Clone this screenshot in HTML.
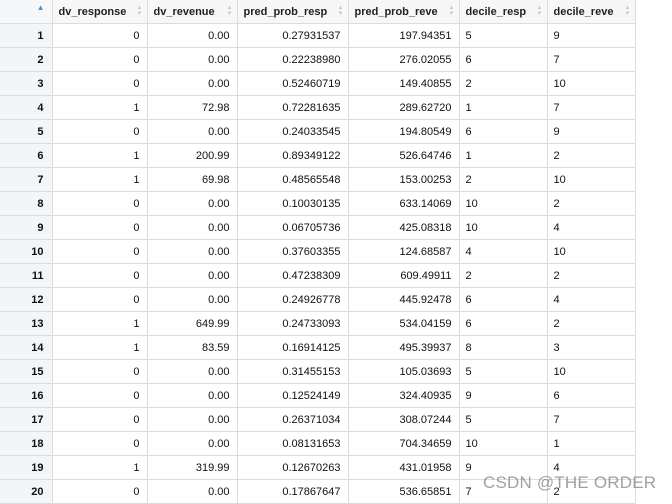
<!DOCTYPE html>
<html><head><meta charset="utf-8"><style>
body{margin:0;background:#fff;width:672px;height:499px;overflow:hidden;position:relative;font-family:"Liberation Sans",Arial,sans-serif;font-size:11px;color:#111}
table{border-collapse:collapse;table-layout:fixed;position:absolute;left:0;top:0}
td,th{border:1px solid #dcdcdc;height:23px;padding:0 6px;white-space:nowrap;overflow:hidden}
th{background:#f6f7f8;text-align:left;font-weight:bold;color:#222;position:relative;border-top:none}
th .s{position:absolute;right:4px;top:5px;font-size:6px;line-height:6px;color:#c8c8c8}
td.n{background:#f3f6f8;text-align:right;font-weight:bold;padding-right:8px}
td.r{text-align:right;padding-right:7px}
td:first-child,th:first-child{border-left:none}
.wm{position:absolute;left:483px;top:473px;font-size:17px;color:rgba(120,120,120,.7);letter-spacing:.2px}
</style></head><body>
<table>
<colgroup><col style="width:52px"><col style="width:95px"><col style="width:90px"><col style="width:111px"><col style="width:111px"><col style="width:88px"><col style="width:88px"></colgroup>
<tr><th><span style="position:absolute;right:7px;top:3px;color:#4a90d9;font-size:8px">▲</span></th><th>dv_response<span class="s">▲<br>▼</span></th><th>dv_revenue<span class="s">▲<br>▼</span></th><th>pred_prob_resp<span class="s">▲<br>▼</span></th><th>pred_prob_reve<span class="s">▲<br>▼</span></th><th>decile_resp<span class="s">▲<br>▼</span></th><th>decile_reve<span class="s">▲<br>▼</span></th></tr>
<tr><td class="n">1</td><td class="r">0</td><td class="r">0.00</td><td class="r">0.27931537</td><td class="r">197.94351</td><td>5</td><td>9</td></tr>
<tr><td class="n">2</td><td class="r">0</td><td class="r">0.00</td><td class="r">0.22238980</td><td class="r">276.02055</td><td>6</td><td>7</td></tr>
<tr><td class="n">3</td><td class="r">0</td><td class="r">0.00</td><td class="r">0.52460719</td><td class="r">149.40855</td><td>2</td><td>10</td></tr>
<tr><td class="n">4</td><td class="r">1</td><td class="r">72.98</td><td class="r">0.72281635</td><td class="r">289.62720</td><td>1</td><td>7</td></tr>
<tr><td class="n">5</td><td class="r">0</td><td class="r">0.00</td><td class="r">0.24033545</td><td class="r">194.80549</td><td>6</td><td>9</td></tr>
<tr><td class="n">6</td><td class="r">1</td><td class="r">200.99</td><td class="r">0.89349122</td><td class="r">526.64746</td><td>1</td><td>2</td></tr>
<tr><td class="n">7</td><td class="r">1</td><td class="r">69.98</td><td class="r">0.48565548</td><td class="r">153.00253</td><td>2</td><td>10</td></tr>
<tr><td class="n">8</td><td class="r">0</td><td class="r">0.00</td><td class="r">0.10030135</td><td class="r">633.14069</td><td>10</td><td>2</td></tr>
<tr><td class="n">9</td><td class="r">0</td><td class="r">0.00</td><td class="r">0.06705736</td><td class="r">425.08318</td><td>10</td><td>4</td></tr>
<tr><td class="n">10</td><td class="r">0</td><td class="r">0.00</td><td class="r">0.37603355</td><td class="r">124.68587</td><td>4</td><td>10</td></tr>
<tr><td class="n">11</td><td class="r">0</td><td class="r">0.00</td><td class="r">0.47238309</td><td class="r">609.49911</td><td>2</td><td>2</td></tr>
<tr><td class="n">12</td><td class="r">0</td><td class="r">0.00</td><td class="r">0.24926778</td><td class="r">445.92478</td><td>6</td><td>4</td></tr>
<tr><td class="n">13</td><td class="r">1</td><td class="r">649.99</td><td class="r">0.24733093</td><td class="r">534.04159</td><td>6</td><td>2</td></tr>
<tr><td class="n">14</td><td class="r">1</td><td class="r">83.59</td><td class="r">0.16914125</td><td class="r">495.39937</td><td>8</td><td>3</td></tr>
<tr><td class="n">15</td><td class="r">0</td><td class="r">0.00</td><td class="r">0.31455153</td><td class="r">105.03693</td><td>5</td><td>10</td></tr>
<tr><td class="n">16</td><td class="r">0</td><td class="r">0.00</td><td class="r">0.12524149</td><td class="r">324.40935</td><td>9</td><td>6</td></tr>
<tr><td class="n">17</td><td class="r">0</td><td class="r">0.00</td><td class="r">0.26371034</td><td class="r">308.07244</td><td>5</td><td>7</td></tr>
<tr><td class="n">18</td><td class="r">0</td><td class="r">0.00</td><td class="r">0.08131653</td><td class="r">704.34659</td><td>10</td><td>1</td></tr>
<tr><td class="n">19</td><td class="r">1</td><td class="r">319.99</td><td class="r">0.12670263</td><td class="r">431.01958</td><td>9</td><td>4</td></tr>
<tr><td class="n">20</td><td class="r">0</td><td class="r">0.00</td><td class="r">0.17867647</td><td class="r">536.65851</td><td>7</td><td>2</td></tr>
</table>
<div class="wm">CSDN @THE ORDER</div>
</body></html>
